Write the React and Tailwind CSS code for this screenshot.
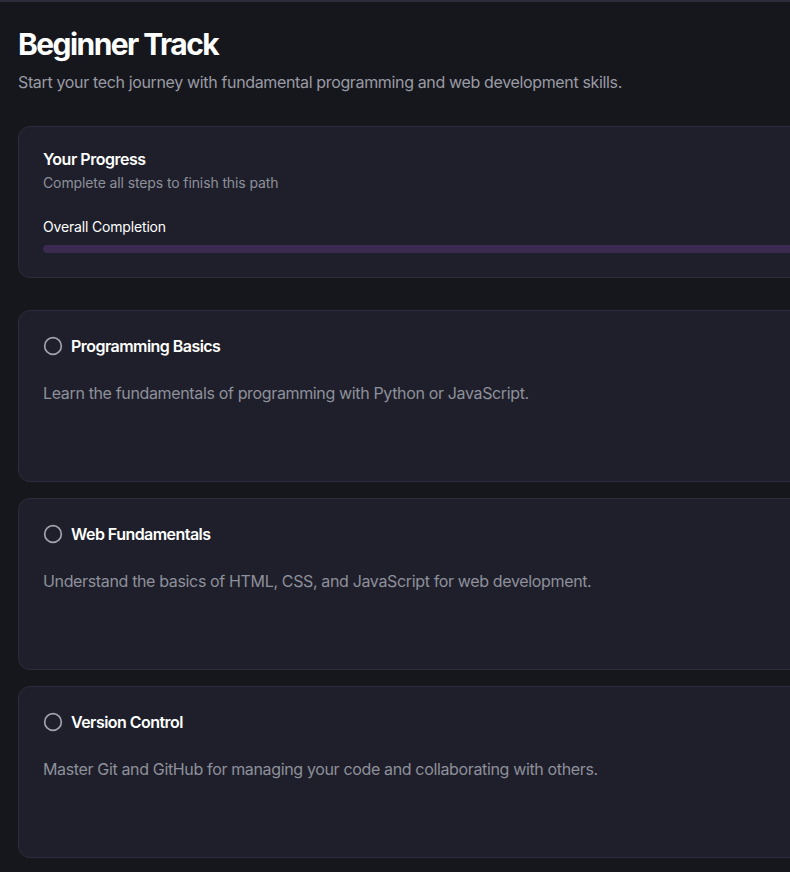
import React from "react";
import { Circle } from "lucide-react";

const steps = [
  {
    title: "Programming Basics",
    description: "Learn the fundamentals of programming with Python or JavaScript.",
  },
  {
    title: "Web Fundamentals",
    description: "Understand the basics of HTML, CSS, and JavaScript for web development.",
  },
  {
    title: "Version Control",
    description: "Master Git and GitHub for managing your code and collaborating with others.",
  },
];

const App = () => {
  return (
    <div className="min-h-screen w-full overflow-hidden bg-[#16171c] font-['Inter',sans-serif] border-t-2 border-[#2c2c3b]">
      <div className="pl-[18px] pt-6 pb-10 w-[1100px]">
        <h1 className="text-3xl font-bold text-white tracking-[-0.052em]">Beginner Track</h1>
        <p className="mt-2 text-base text-[#9a9ba5] tracking-[-0.022em]">
          Start your tech journey with fundamental programming and web development skills.
        </p>

        {/* Progress card */}
        <div className="mt-8 rounded-xl border border-[#2b2d3f] bg-[#1e1f2a]">
          <div className="p-6 flex flex-col gap-1.5">
            <h2 className="text-base font-semibold leading-none text-white tracking-[-0.03em]">Your Progress</h2>
            <p className="text-sm text-[#8e909b] tracking-[-0.008em]">Complete all steps to finish this path</p>
          </div>
          <div className="px-6 pb-6">
            <p className="text-sm text-white mb-2 tracking-[-0.012em]">Overall Completion</p>
            <div className="h-2 w-full rounded-full bg-[#3a2a52]" />
          </div>
        </div>

        {/* Steps */}
        <div className="mt-8 flex flex-col gap-4">
          {steps.map((step) => (
            <div
              key={step.title}
              className="min-h-[172px] rounded-xl border border-[#2b2d3f] bg-[#1e1f2a]"
            >
              <div className="px-6 pt-[23px] pb-[23px] flex items-center gap-2">
                <Circle className="h-5 w-5 text-[#a1a2ab]" strokeWidth={2} />
                <h3 className="text-base font-semibold text-white tracking-[-0.034em]">{step.title}</h3>
              </div>
              <div className="px-6 pb-6">
                <p className="text-base text-[#8e909b] tracking-[-0.022em]">{step.description}</p>
              </div>
            </div>
          ))}
        </div>
      </div>
    </div>
  );
};

export default App;
